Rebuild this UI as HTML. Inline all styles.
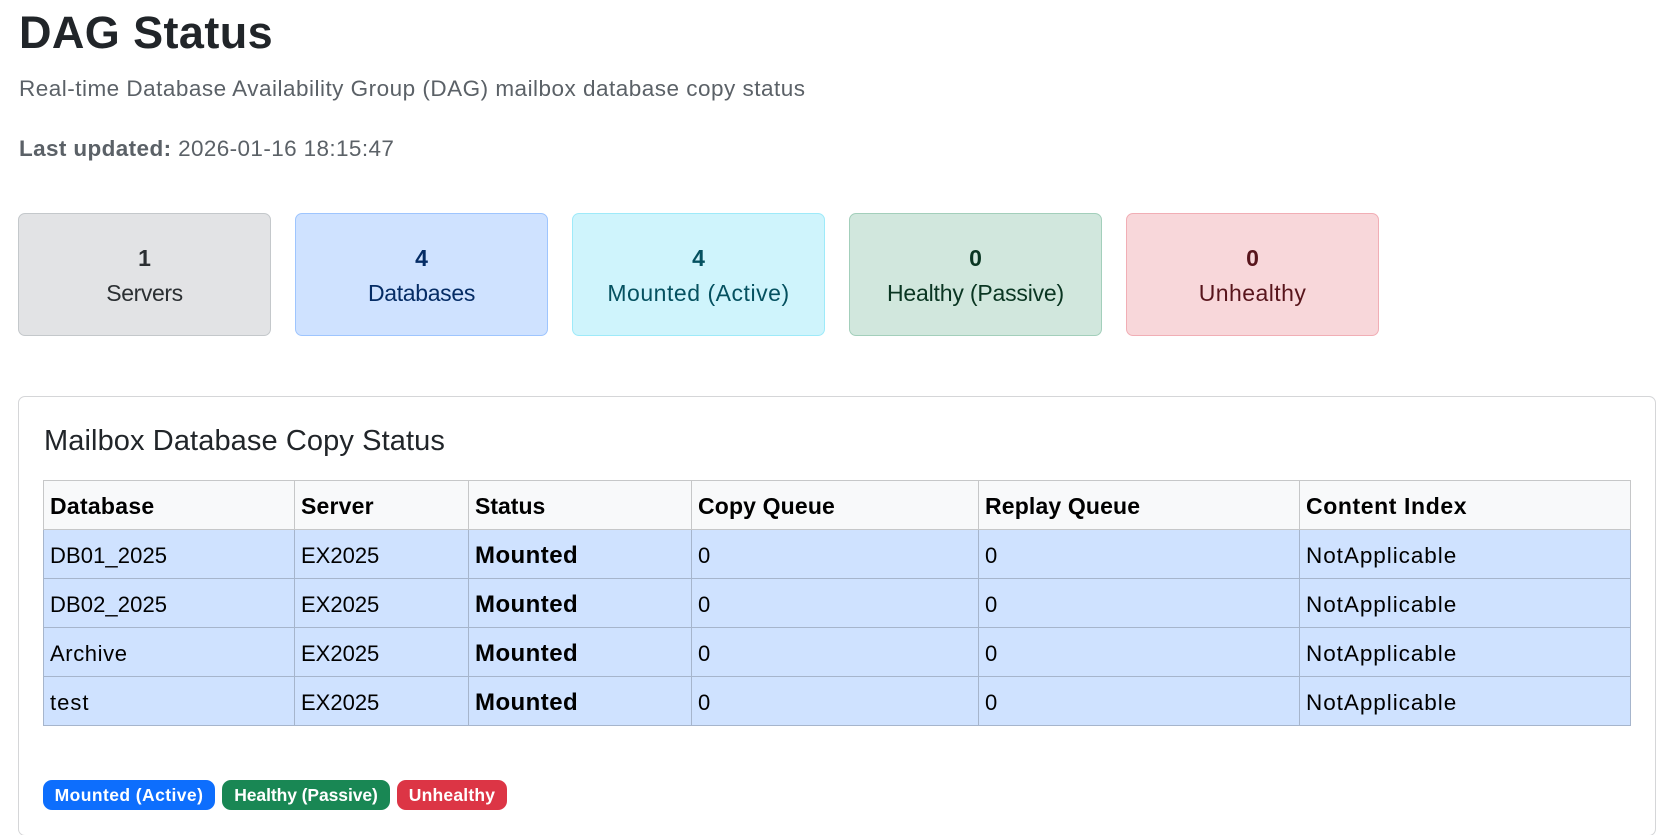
<!DOCTYPE html>
<html lang="en">
<head>
<meta charset="utf-8">
<title>DAG Status</title>
<style>
html,body{margin:0;padding:0;background:#fff;width:1674px;height:835px;overflow:hidden}
body{position:relative;font-family:"Liberation Sans",sans-serif;color:#212529}
.t{position:absolute;white-space:nowrap}
h1{position:absolute;margin:0;left:19px;top:5px;line-height:55px;font-size:45px;font-weight:700;letter-spacing:.4px;white-space:nowrap}
.sub{left:19px;top:73px;line-height:32px;font-size:22.5px;color:#5b6167;letter-spacing:.49px;white-space:nowrap}
.upd{left:19px;top:133px;line-height:32px;font-size:22.5px;color:#5b6167;letter-spacing:.38px}
.card{position:absolute;top:213px;width:253px;height:123px;box-sizing:border-box;border:1px solid;border-radius:7px;text-align:center}
.card b{position:absolute;left:0;right:0;top:20px;line-height:48px;font-size:23px;font-weight:700}
.card span{position:absolute;left:0;right:0;top:55px;line-height:48px;font-size:23px;white-space:nowrap}
.panel{position:absolute;left:18px;top:396px;width:1638px;height:440px;box-sizing:border-box;border:1px solid #d5d6d8;border-radius:7px}
.hd{left:44px;top:421px;line-height:40px;font-size:29px;color:#212529;letter-spacing:.1px}
table{position:absolute;left:43px;top:480px;width:1587px;border-collapse:collapse;table-layout:fixed;font-size:22px;color:#000}
th,td{height:48px;padding:3px 0 0 6px;box-sizing:border-box;text-align:left;line-height:44px;white-space:nowrap;overflow:hidden}
th{background:#f8f9fa;border:1px solid #c6c7c8;font-weight:700;font-size:23px;padding-top:2px}
td{background:#cfe2ff;border:1px solid #a6b5cc}
td b{font-size:24px;letter-spacing:.45px}
.ns{font-size:22.5px;letter-spacing:.95px}
tr{height:49px}
.bd{position:absolute;top:780px;height:30px;border-radius:9px;color:#fff;font-size:17.5px;font-weight:700;line-height:31px;text-align:center;white-space:nowrap}
</style>
</head>
<body>
<h1>DAG Status</h1>
<div class="t sub">Real-time Database Availability Group (DAG) mailbox database copy status</div>
<div class="t upd"><b>Last updated:</b> 2026-01-16 18:15:47</div>

<div class="card" style="left:18px;background:#e2e3e5;border-color:#c4c8cb;color:#2b2f32"><b>1</b><span style="letter-spacing:-.4px">Servers</span></div>
<div class="card" style="left:295px;background:#cfe2ff;border-color:#9ec5fe;color:#052c65"><b>4</b><span style="letter-spacing:-.33px">Databases</span></div>
<div class="card" style="left:572px;background:#cff4fc;border-color:#9eeaf9;color:#055160"><b>4</b><span style="letter-spacing:.53px">Mounted (Active)</span></div>
<div class="card" style="left:849px;background:#d1e7dd;border-color:#a3cfbb;color:#0a3622"><b>0</b><span style="letter-spacing:-.19px">Healthy (Passive)</span></div>
<div class="card" style="left:1126px;background:#f8d7da;border-color:#f1aeb5;color:#58151c"><b>0</b><span style="letter-spacing:.45px">Unhealthy</span></div>

<div class="panel"></div>
<div class="t hd">Mailbox Database Copy Status</div>
<table>
<colgroup><col style="width:251px"><col style="width:174px"><col style="width:223px"><col style="width:287px"><col style="width:321px"><col style="width:331px"></colgroup>
<thead><tr><th style="letter-spacing:.27px">Database</th><th style="letter-spacing:.2px">Server</th><th>Status</th><th style="letter-spacing:.15px">Copy Queue</th><th style="letter-spacing:.15px">Replay Queue</th><th style="letter-spacing:.6px">Content Index</th></tr></thead>
<tbody>
<tr><td style="letter-spacing:.1px">DB01_2025</td><td>EX2025</td><td><b>Mounted</b></td><td>0</td><td>0</td><td class="ns">NotApplicable</td></tr>
<tr><td style="letter-spacing:.1px">DB02_2025</td><td>EX2025</td><td><b>Mounted</b></td><td>0</td><td>0</td><td class="ns">NotApplicable</td></tr>
<tr><td style="letter-spacing:.6px">Archive</td><td>EX2025</td><td><b>Mounted</b></td><td>0</td><td>0</td><td class="ns">NotApplicable</td></tr>
<tr><td style="letter-spacing:1px">test</td><td>EX2025</td><td><b>Mounted</b></td><td>0</td><td>0</td><td class="ns">NotApplicable</td></tr>
</tbody>
</table>
<div class="bd" style="left:43px;width:172px;background:#0d6efd;letter-spacing:.42px">Mounted (Active)</div>
<div class="bd" style="left:222px;width:168px;background:#198754;letter-spacing:-.08px">Healthy (Passive)</div>
<div class="bd" style="left:397px;width:110px;background:#dc3545;letter-spacing:.2px">Unhealthy</div>
</body>
</html>
